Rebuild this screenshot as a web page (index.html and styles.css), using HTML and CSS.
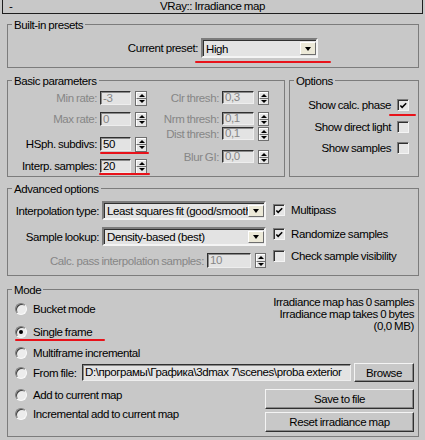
FILE: index.html
```html
<!DOCTYPE html>
<html>
<head>
<meta charset="utf-8">
<title>VRay:: Irradiance map</title>
<link rel="stylesheet" href="styles.css">
</head>
<body>
<div class="rollout"><span class="collapse">-</span><span class="rollout-title">VRay:: Irradiance map</span><span></span></div>
<main class="content">
  <section class="group g-presets">
    <div class="legend">Built-in presets</div>
    <div class="preset-row">
      <span class="preset-lbl">Current preset:</span>
      <div class="combo combo-preset">
        <span class="combo-text">High</span>
        <span class="combo-btn"><i class="tri-down"></i></span>
        <span class="mark mark-preset"></span>
      </div>
    </div>
  </section>

  <div class="row2">
    <section class="group g-basic">
      <div class="legend">Basic parameters</div>
      <div class="basic-cols">
        <div class="bcol bcol-left">
          <div class="srow"><span class="slbl dis">Min rate:</span><span class="field dis">-3</span><span class="spin"><span class="spin-btn"><i class="tri-up"></i></span><span class="spin-btn"><i class="tri-down"></i></span></span></div>
          <div class="srow r-max"><span class="slbl dis">Max rate:</span><span class="field dis">0</span><span class="spin"><span class="spin-btn"><i class="tri-up"></i></span><span class="spin-btn"><i class="tri-down"></i></span></span></div>
          <div class="srow r-hsph"><span class="slbl">HSph. subdivs:</span><span class="field">50<span class="mark mark-hsph"></span></span><span class="spin"><span class="spin-btn"><i class="tri-up"></i></span><span class="spin-btn"><i class="tri-down"></i></span></span></div>
          <div class="srow r-interp"><span class="slbl">Interp. samples:</span><span class="field">20<span class="mark mark-interp"></span></span><span class="spin"><span class="spin-btn"><i class="tri-up"></i></span><span class="spin-btn"><i class="tri-down"></i></span></span></div>
        </div>
        <div class="bcol bcol-right">
          <div class="srow"><span class="slbl dis">Clr thresh:</span><span class="field dis">0,3</span><span class="spin"><span class="spin-btn"><i class="tri-up"></i></span><span class="spin-btn"><i class="tri-down"></i></span></span></div>
          <div class="srow r-nrm"><span class="slbl dis">Nrm thresh:</span><span class="field dis">0,1</span><span class="spin"><span class="spin-btn"><i class="tri-up"></i></span><span class="spin-btn"><i class="tri-down"></i></span></span></div>
          <div class="srow r-dist"><span class="slbl dis">Dist thresh:</span><span class="field dis">0,1</span><span class="spin"><span class="spin-btn"><i class="tri-up"></i></span><span class="spin-btn"><i class="tri-down"></i></span></span></div>
          <div class="srow r-blur"><span class="slbl dis">Blur GI:</span><span class="field dis">0,0</span><span class="spin"><span class="spin-btn"><i class="tri-up"></i></span><span class="spin-btn"><i class="tri-down"></i></span></span></div>
        </div>
      </div>
    </section>

    <section class="group g-options">
      <div class="legend">Options</div>
      <div class="opt-row o1"><span>Show calc. phase</span><span class="check on"><svg viewBox="0 0 10 10" width="10" height="10"><polyline points="1.5,4.5 3.5,6.5 8,2" fill="none" stroke="#000" stroke-width="1.7"/></svg><span class="mark mark-calc"></span></span></div>
      <div class="opt-row o2"><span>Show direct light</span><span class="check"></span></div>
      <div class="opt-row o3"><span>Show samples</span><span class="check"></span></div>
    </section>
  </div>

  <section class="group g-adv">
    <div class="legend">Advanced options</div>
    <div class="adv-cols">
      <div class="adv-left">
        <div class="arow">
          <span class="albl">Interpolation type:</span>
          <div class="combo combo-adv"><span class="combo-text">Least squares fit (good/smooth)</span><span class="combo-btn"><i class="tri-down"></i></span></div>
        </div>
        <div class="arow a2">
          <span class="albl">Sample lookup:</span>
          <div class="combo combo-adv"><span class="combo-text">Density-based (best)</span><span class="combo-btn"><i class="tri-down"></i></span></div>
        </div>
        <div class="calc-row">
          <span class="dis">Calc. pass interpolation samples:</span>
          <span class="field field-calc dis">10</span>
          <span class="spin spin-calc"><span class="spin-btn"><i class="tri-up"></i></span><span class="spin-btn"><i class="tri-down"></i></span></span>
        </div>
      </div>
      <div class="adv-right">
        <div class="crow"><span class="check on"><svg viewBox="0 0 10 10" width="10" height="10"><polyline points="1.5,4.5 3.5,6.5 8,2" fill="none" stroke="#000" stroke-width="1.7"/></svg></span><span>Multipass</span></div>
        <div class="crow c2"><span class="check on"><svg viewBox="0 0 10 10" width="10" height="10"><polyline points="1.5,4.5 3.5,6.5 8,2" fill="none" stroke="#000" stroke-width="1.7"/></svg></span><span>Randomize samples</span></div>
        <div class="crow c3"><span class="check"></span><span>Check sample visibility</span></div>
      </div>
    </div>
  </section>

  <section class="group g-mode">
    <div class="legend">Mode</div>
    <div class="mode-top">
      <div class="mode-radios">
        <div class="radio-row"><span class="radio"></span><span>Bucket mode</span></div>
        <div class="radio-row m-single"><span class="radio on"></span><span>Single frame</span><span class="mark mark-single"></span></div>
        <div class="radio-row m-multi"><span class="radio"></span><span>Multiframe incremental</span></div>
      </div>
      <div class="info">Irradiance map has 0 samples<br>Irradiance map takes 0 bytes<br>(0,0 MB)</div>
    </div>
    <div class="file-row">
      <span class="radio"></span><span class="file-lbl">From file:</span>
      <span class="field field-file">D:\програмы\Графика\3dmax 7\scenes\proba exterior</span>
      <span class="btn btn-browse">Browse</span>
    </div>
    <div class="mode-bottom">
      <div class="mode-radios-b">
        <div class="radio-row"><span class="radio"></span><span>Add to current map</span></div>
        <div class="radio-row m-incr"><span class="radio"></span><span>Incremental add to current map</span></div>
      </div>
      <div class="btn-col">
        <span class="btn btn-wide">Save to file</span>
        <span class="btn btn-wide btn-reset">Reset irradiance map</span>
      </div>
    </div>
  </section>
</main>
</body>
</html>
```

FILE: styles.css
```css
* { box-sizing: border-box; }
html, body { margin: 0; padding: 0; }
body {
  background: #c8c8c8;
  width: 425px;
  height: 440px;
  overflow: hidden;
  font-family: "Liberation Sans", Arial, sans-serif;
  font-size: 11.5px;
  letter-spacing: -0.4px;
  word-spacing: -0.5px;
  line-height: 14px;
  color: #000;
  white-space: nowrap;
}
i { display: block; font-style: normal; }
.dis { color: #868686; }

/* rollout title */
.rollout {
  margin: 0 2px;
  height: 14px;
  border: 1px solid #1e1e1e;
  border-top: 0;
  display: grid;
  grid-template-columns: 1fr auto 1fr;
  align-items: center;
  line-height: 13px;
}
.collapse { padding-left: 6px; }

.content { padding: 0 6px 0 7px; }

/* group boxes */
.group { border: 1px solid #7c7c7c; }
.legend {
  margin: -7px 0 0 4px;
  padding: 0 2px;
  width: max-content;
  background: #c8c8c8;
  line-height: 14px;
}

/* annotations */
.mark {
  position: absolute;
  height: 2px;
  background: #e8121a;
  border-radius: 1px;
}

/* triangles */
.tri-down { width: 0; height: 0; border-left: 3px solid transparent; border-right: 3px solid transparent; border-top: 3px solid #000; }
.tri-up { width: 0; height: 0; border-left: 3px solid transparent; border-right: 3px solid transparent; border-bottom: 3px solid #000; }

/* combo */
.combo {
  position: relative;
  display: flex;
  align-items: stretch;
  background: #e3e3e3;
  border: 2px solid;
  border-color: #7c7c7c #f4f4f4 #f4f4f4 #7c7c7c;
  box-shadow: inset 1px 1px 0 #303030;
  padding: 1px 0 0 1px;
}
.combo-text {
  flex: 1;
  overflow: hidden;
  white-space: nowrap;
  padding-left: 2px;
  line-height: 14px;
  align-self: center;
}
.combo-btn {
  width: 16px;
  flex: none;
  background: #ece9d8;
  border: 1px solid;
  border-color: #ffffff #6e6e6e #6e6e6e #ffffff;
  display: flex;
  align-items: center;
  justify-content: center;
  margin: 1px 0 1px 0;
}
.combo-btn .tri-down { border-left-width: 3.5px; border-right-width: 3.5px; border-top-width: 4px; }

/* presets */
.g-presets { margin-top: 10px; padding-bottom: 9px; }
.preset-row { display: flex; align-items: center; margin-top: 6px; }
.preset-lbl { width: 190px; text-align: right; margin-right: 3px; }
.combo-preset { width: 117px; height: 20px; }
.mark-preset { left: -8px; top: 21px; width: 136px; }

/* basic + options */
.row2 { display: flex; gap: 4px; margin-top: 12px; }
.g-basic { width: 278px; padding-bottom: 3px; }
.g-options { width: 130px; }
.basic-cols { display: flex; margin-top: 3px; }
.bcol-left { width: 139px; }
.bcol-right { width: 122px; }
.srow { display: flex; align-items: center; height: 14px; }
.slbl { text-align: right; margin-right: 3px; white-space: nowrap; }
.bcol-left .slbl { width: 89px; }
.bcol-right .slbl { width: 72px; }
.field {
  position: relative;
  display: block;
  height: 14px;
  background: #e3e3e3;
  border: 1px solid;
  border-color: #303030 #eeeeee #eeeeee #303030;
  box-shadow: inset 1px 1px 0 #8a8a8a;
  padding-left: 2px;
  line-height: 12px;
  white-space: nowrap;
  overflow: visible;
}
.bcol-left .field { width: 31px; }
.bcol-right .field { width: 32px; height: 13px; line-height: 11px; }
.bcol-right .srow { height: 13px; }
.spin {
  display: flex;
  flex-direction: column;
  width: 12px;
  height: 15px;
  margin-left: 4px;
  border: 1px solid #6e6e6e;
  background: #e6e6e6;
}
.bcol-right .spin { width: 11px; height: 14px; }
.spin-btn {
  flex: 1;
  display: flex;
  align-items: center;
  justify-content: center;
  border-top: 1px solid #ffffff;
  border-left: 1px solid #ffffff;
}
.spin-btn + .spin-btn { border-top: 1px solid #6e6e6e; }
.r-max { margin-top: 7px; }
.r-hsph { margin-top: 11px; }
.r-interp { margin-top: 8px; }
.r-nrm { margin-top: 8px; }
.r-dist { margin-top: 2px; }
.r-blur { margin-top: 10px; }
.mark-hsph { left: -1px; top: 14px; width: 49px; }
.mark-interp { left: -2px; top: 13px; width: 51px; }

/* checkboxes */
.check {
  position: relative;
  display: flex;
  align-items: center;
  justify-content: center;
  width: 12px;
  height: 12px;
  flex: none;
  background: #e6e6e6;
  border: 1px solid;
  border-color: #7c7c7c #f4f4f4 #f4f4f4 #7c7c7c;
  box-shadow: inset 1px 1px 0 #303030;
  padding: 1px 0 0 1px;
}
.check svg { display: block; }
.opt-row {
  display: flex;
  justify-content: flex-end;
  align-items: center;
  gap: 6px;
  height: 12px;
  padding-right: 9px;
}
.o1 { margin-top: 11px; }
.o2 { margin-top: 10px; }
.o3 { margin-top: 9px; }
.mark-calc { left: -9px; top: 14px; width: 27px; }

/* advanced */
.g-adv { margin-top: 11px; padding-bottom: 7px; }
.adv-cols { display: flex; margin-top: 5px; }
.adv-left { width: 258px; }
.arow { display: flex; align-items: center; }
.a2 { margin-top: 7px; }
.albl { width: 91px; text-align: right; margin-right: 3px; white-space: nowrap; }
.combo-adv { width: 164px; height: 19px; }
.calc-row { display: flex; justify-content: flex-end; align-items: center; margin-top: 7px; height: 15px; }
.field-calc { width: 44px; height: 15px; margin-left: 3px; line-height: 13px; }
.spin-calc { width: 11px; margin-left: 4px; }
.adv-right { margin-left: 7px; padding-top: 3px; }
.crow { display: flex; align-items: center; gap: 6px; height: 12px; }
.c2 { margin-top: 12px; }
.c3 { margin-top: 10px; }

/* mode */
.g-mode { margin-top: 13px; }
.mode-top { display: flex; justify-content: space-between; padding-right: 4px; }
.mode-radios { padding-top: 5px; padding-left: 7px; }
.radio-row { position: relative; display: flex; align-items: center; gap: 6px; height: 14px; }
.m-single { margin-top: 9px; }
.m-multi { margin-top: 7px; }
.m-incr { margin-top: 5px; }
.mark-single { left: 0; top: 14px; width: 90px; }
.radio {
  position: relative;
  display: block;
  width: 12px;
  height: 12px;
  flex: none;
  border-radius: 50%;
  background: #ececec;
  border: 1px solid;
  border-color: #7c7c7c #fafafa #fafafa #7c7c7c;
  box-shadow: inset 1px 1px 0 #404040;
}
.radio.on::after {
  content: "";
  position: absolute;
  left: 3px;
  top: 3px;
  width: 4px;
  height: 4px;
  border-radius: 50%;
  background: #000;
}
.info { text-align: right; line-height: 12px; margin-top: -1px; }
.file-row { display: flex; align-items: center; height: 19px; margin-top: 3px; padding: 0 4px 0 7px; }
.file-lbl { width: 49px; flex: none; margin-left: 6px; }
.field-file { width: 269px; flex: none; height: 17px; line-height: 15px; overflow: hidden; }
.btn {
  display: flex;
  align-items: center;
  justify-content: center;
  background: #c8c8c8;
  border: 1px solid;
  border-color: #f4f4f4 #303030 #303030 #f4f4f4;
  box-shadow: inset -1px -1px 0 #8a8a8a;
  white-space: nowrap;
}
.btn-browse { width: 60px; flex: none; height: 19px; margin-left: 3px; }
.mode-bottom { display: flex; justify-content: space-between; margin-top: 6px; padding: 0 4px 4px 7px; }
.btn-col { display: flex; flex-direction: column; padding-top: 1px; }
.btn-wide { width: 149px; height: 20px; }
.btn-reset { margin-top: 3px; }
```
